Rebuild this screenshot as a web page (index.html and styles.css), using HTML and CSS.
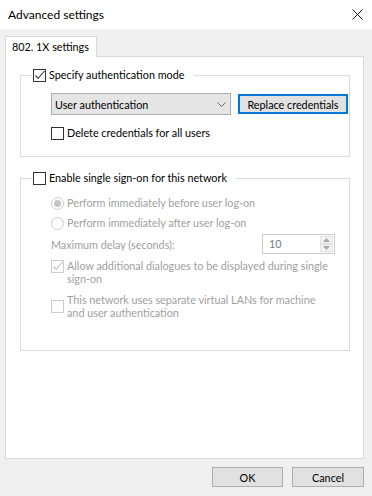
FILE: index.html
```html
<!DOCTYPE html>
<html>
<head>
<meta charset="utf-8">
<title>Advanced settings</title>
<link rel="stylesheet" href="styles.css">
</head>
<body>
<div class="titlebar">
  <span class="title">Advanced settings</span>
  <svg class="close" width="11" height="11" viewBox="0 0 11 11"><path d="M0.5 0.5L10.5 10.5M10.5 0.5L0.5 10.5" stroke="#111" stroke-width="1" fill="none"/></svg>
</div>
<div class="main">
  <div class="tabs"><div class="tab">802. 1X settings</div></div>
  <div class="pane">
    <fieldset class="group g1">
      <legend>
        <label class="check"><span class="box"><svg width="11" height="11" viewBox="0 0 11 11"><path d="M1.5 5.5L4.2 8.3L10.5 1" stroke="#333" stroke-width="1.1" fill="none"/></svg></span><span>Specify authentication mode</span></label>
      </legend>
      <div class="gbody">
        <div class="combo-row">
          <div class="combo"><span>User authentication</span><svg width="9" height="5" viewBox="0 0 9 5"><path d="M0.5 0.5L4.5 4.5L8.5 0.5" stroke="#666" stroke-width="1" fill="none"/></svg></div>
          <button class="btn default">Replace credentials</button>
        </div>
        <label class="check del-row"><span class="box"></span><span>Delete credentials for all users</span></label>
      </div>
    </fieldset>

    <fieldset class="group g2">
      <legend>
        <label class="check"><span class="box"></span><span>Enable single sign-on for this network</span></label>
      </legend>
      <div class="gbody dis">
        <div class="opt r1"><span class="radio on"></span><span>Perform immediately before user log-on</span></div>
        <div class="opt r2"><span class="radio"></span><span>Perform immediately after user log-on</span></div>
        <div class="delay-row">
          <span>Maximum delay (seconds):</span>
          <div class="spin">
            <span class="spin-val">10</span>
            <div class="spin-btns">
              <span class="spin-b"><svg width="7" height="4" viewBox="0 0 7 4"><path d="M0 4L3.5 0L7 4Z" fill="#a8a8a8"/></svg></span>
              <span class="spin-b"><svg width="7" height="4" viewBox="0 0 7 4"><path d="M0 0L7 0L3.5 4Z" fill="#a8a8a8"/></svg></span>
            </div>
          </div>
        </div>
        <div class="multi top">
          <span class="box dbox"><svg width="11" height="11" viewBox="0 0 11 11"><path d="M1.5 5.5L4.2 8.3L10.5 1" stroke="#bdbdbd" stroke-width="1.1" fill="none"/></svg></span>
          <span class="mtext">Allow additional dialogues to be displayed during single<br>sign-on</span>
        </div>
        <div class="multi mid">
          <span class="box dbox"></span>
          <span class="mtext">This network uses separate virtual LANs for machine<br>and user authentication</span>
        </div>
      </div>
    </fieldset>
  </div>
  <div class="footer">
    <button class="btn ok">OK</button>
    <button class="btn cancel">Cancel</button>
  </div>
</div>
</body>
</html>
```

FILE: styles.css
```css
* { box-sizing: border-box; }
html, body { margin: 0; padding: 0; }
body {
  width: 372px;
  height: 496px;
  overflow: hidden;
  background: #f0f0f0;
  font-family: Lato, "Liberation Sans", sans-serif;
  font-size: 10.8px;
  color: #000;
}
.titlebar {
  height: 29px;
  background: #fff;
  display: flex;
  align-items: center;
  justify-content: space-between;
  padding: 0 9px 1px 8px;
}
.title { font-size: 12px; }
.close { display: block; }

.main { padding: 7px 8px 0 5px; }
.tabs { display: flex; position: relative; z-index: 1; margin-bottom: -1px; }
.tab {
  width: 92px;
  height: 21px;
  background: #fff;
  border: 1px solid #d9d9d9;
  border-bottom: none;
  padding-left: 6px;
  line-height: 19px;
}
.pane {
  width: 359px;
  height: 403px;
  background: #fff;
  border: 1px solid #d9d9d9;
  padding: 10px 0 0 14px;
}

.group {
  width: 330px;
  margin: 0;
  min-width: 0;
  border: 1px solid #dcdcdc;
}
.group legend {
  padding: 0 10px 0 1px;
  height: 16px;
}
.g1 { padding: 10px 1px 15px 11px; }
.g2 { margin-top: 13px; padding: 9px 14px 31px 11px; }
.gbody { margin-left: 19px; }
.dis { color: #a0a0a0; }

.check { display: flex; align-items: center; gap: 3px; line-height: 16px; }
.box {
  width: 13px;
  height: 13px;
  flex: none;
  border: 1px solid #333;
  background: #fff;
  display: flex;
  align-items: center;
  justify-content: center;
}
.box svg { display: block; }
.dbox { border-color: #cccccc; }

.combo-row { display: flex; align-items: center; gap: 7px; }
.combo {
  width: 180px;
  height: 22px;
  background: #e5e5e5;
  border: 1px solid #adadad;
  display: flex;
  align-items: center;
  justify-content: space-between;
  padding: 0 4px 0 3px;
}
.combo svg { display: block; }
.btn {
  height: 20px;
  background: #e1e1e1;
  border: 1px solid #adadad;
  font: inherit;
  color: #000;
  padding: 0;
  margin: 0;
}
.btn.default { width: 110px; border: 2px solid #0078d7; }
.del-row { margin-top: 10px; }

.opt { display: flex; align-items: center; gap: 3px; line-height: 16px; }
.r2 { margin-top: 4px; }
.radio {
  width: 13px;
  height: 13px;
  flex: none;
  border-radius: 50%;
  border: 1px solid #cccccc;
  display: flex;
  align-items: center;
  justify-content: center;
}
.radio.on::after {
  content: "";
  width: 7px;
  height: 7px;
  border-radius: 50%;
  background: #c4c4c4;
}

.delay-row { display: flex; align-items: center; margin-top: 3px; }
.spin {
  margin-left: auto;
  width: 73px;
  height: 20px;
  border: 1px solid #cccccc;
  display: flex;
}
.spin-val { flex: 1; padding-left: 6px; line-height: 18px; color: #7a7a7a; }
.spin-btns { width: 14px; display: flex; flex-direction: column; padding: 1px 1px 1px 0; }
.spin-b {
  flex: 1;
  background: #f3f3f3;
  border: 1px solid #e3e3e3;
  display: flex;
  align-items: center;
  justify-content: center;
}
.spin-b svg { display: block; }

.multi { display: flex; gap: 3px; line-height: 13px; }
.mtext { white-space: nowrap; }
.multi.top { margin-top: 5px; align-items: flex-start; }
.multi.top .box { margin-top: 1px; }
.multi.mid { margin-top: 8px; align-items: center; }

.footer { display: flex; justify-content: flex-end; gap: 9px; padding-top: 8px; }
.btn.ok { width: 71px; }
.btn.cancel { width: 72px; }
```
